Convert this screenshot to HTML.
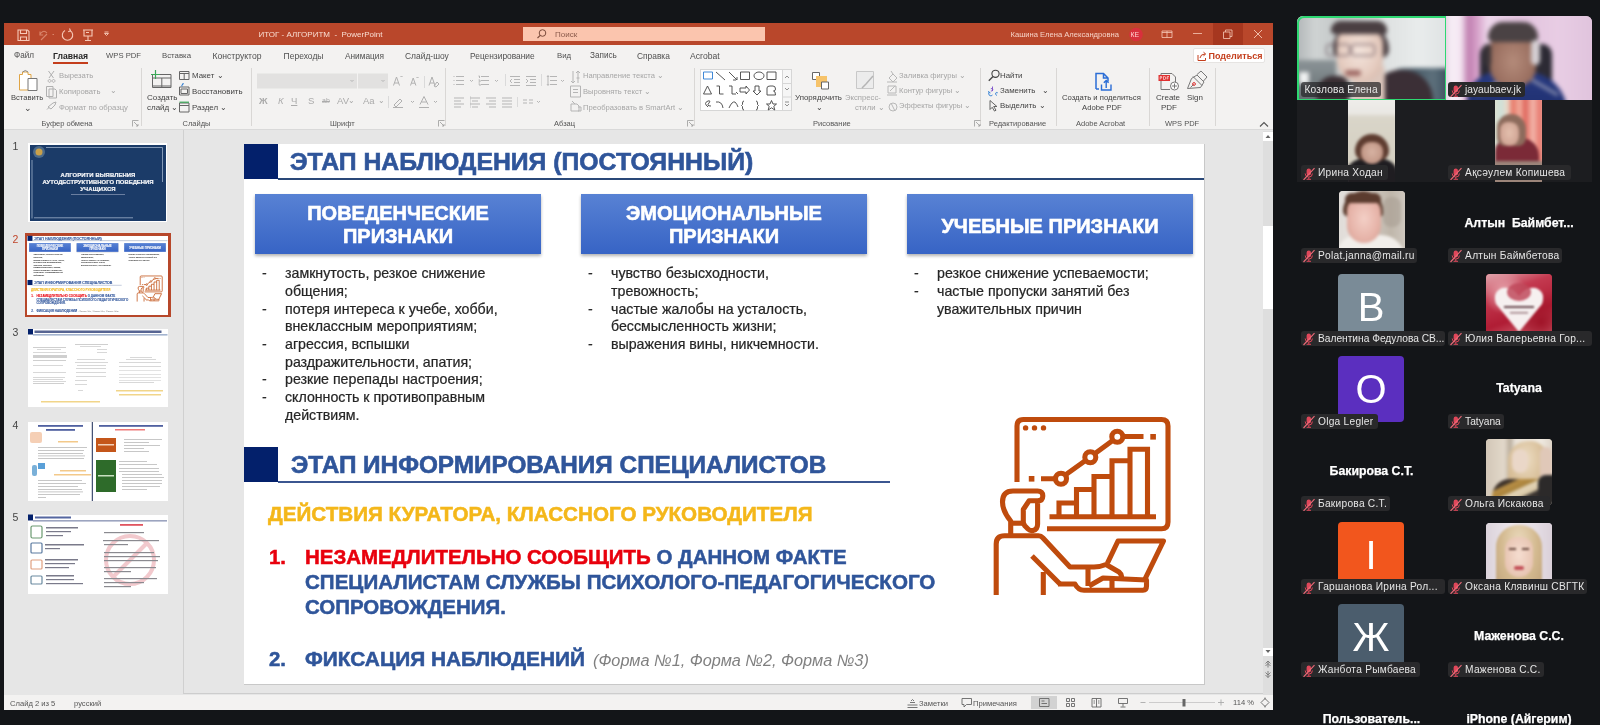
<!DOCTYPE html>
<html><head><meta charset="utf-8">
<style>
*{margin:0;padding:0;box-sizing:border-box}
html,body{width:1600px;height:725px;overflow:hidden;background:#131518;font-family:"Liberation Sans",sans-serif;position:relative}
body{will-change:transform}
.a{position:absolute;white-space:nowrap}
.r{position:absolute}
.tab{position:absolute;white-space:nowrap;font-size:8.6px;color:#454545;top:51px;line-height:10px}
.rl{position:absolute;white-space:nowrap;font-size:8px;color:#404040;line-height:10px}
.rg{position:absolute;white-space:nowrap;font-size:8px;color:#a9a9a9;line-height:10px}
.sep{position:absolute;width:1px;background:#d2d2d2}
.hdr{position:absolute;white-space:nowrap;font-weight:bold;color:#2f559a;font-size:22px;line-height:24px}
.bx{position:absolute;height:60px;background:linear-gradient(#5882d4,#3764c5);box-shadow:0 2px 3px rgba(0,0,0,.3);color:#fff;font-weight:bold;text-align:center}
.li{position:absolute;white-space:nowrap;font-size:13.2px;color:#2b2b2b;line-height:17.9px}
.lbl{position:absolute;overflow:hidden;height:15px;background:#29292b;border-radius:3px;color:#e6e6e6;font-size:10.2px;line-height:15px;padding-left:17.5px;padding-right:4px;white-space:nowrap}
.mic{position:absolute;left:1.5px;top:1.5px}
.nm{position:absolute;color:#fff;font-weight:bold;-webkit-text-stroke:0.25px #fff;font-size:12.3px;white-space:nowrap;line-height:14px}
.av{position:absolute;width:66px;height:66px;border-radius:4px;color:#fff;text-align:center;font-size:40px;line-height:66px}
</style></head><body>
<!-- PowerPoint window frame -->
<div class="r" style="left:4px;top:23px;width:1269px;height:22px;background:#b9472b"></div>
<div class="r" style="left:4px;top:45px;width:1269px;height:85px;background:#f3f2f1"></div>
<div class="r" style="left:4px;top:129px;width:1269px;height:1px;background:#d9d9d9"></div>
<div class="r" style="left:4px;top:130px;width:1269px;height:565px;background:#e6e6e6"></div>
<div class="r" style="left:183px;top:130px;width:1080px;height:564px;background:#e6e6e6;border-left:1px solid #d0d0d0;border-bottom:1px solid #cdcdcd"></div>
<div class="r" style="left:4px;top:695px;width:1269px;height:15px;background:#f3f2f1"></div>
<!--RIBBON-->
<div class="r" style="left:1212.5px;top:23px;width:30px;height:22px;background:#a6371f;"></div>
<svg class="r" style="left:0;top:0" width="1273" height="50" viewBox="0 0 1273 50">
<g fill="none" stroke="#f6c9b8" stroke-width="1.1">
<path d="M18 30h9.5l1.5 1.5v9h-11z M20.5 30v3.5h6v-3.5 M20.5 40.5v-3.5h6v3.5"/>
<path d="M47 33 q-3 -3.5 -6 0 l-1.5 1.8 M40 31.5v3.5h3.2 M41 40 l6 -6" stroke="#d9866c"/>
<path d="M52.5 34.5h1.5" stroke="#d9866c"/>
<path d="M65 30.5 a5.2 5.2 0 1 0 5 0 M69.5 28.5 l1 2.3 l-2.3 0.9"/>
<path d="M83 30h10 M84 30v6h8v-6 M88 36v4 M85 40.5h6 M86 32.5h3"/>
<path d="M104.5 33.5h4l-2 2z M104.5 32h4" stroke-width="0.9"/>
<path d="M1162 31h10v6.5h-10z M1167 31v6.5 M1162 32.5h10" stroke-width="0.8"/>
<path d="M1193 33.5h9" stroke-width="0.8"/>
<path d="M1223.5 32h6.5v6.5h-6.5z M1225.5 32v-2h6.5v6.5h-2" stroke-width="0.8"/>
<path d="M1254 30l8 8 M1262 30l-8 8" stroke-width="0.9"/>
</g>
<circle cx="1136" cy="34.5" r="6.8" fill="#d8303c"/>
</svg>
<div class="a" style="left:258.5px;top:29.9px;font-size:8.0px;line-height:10px;color:#f9ddd2;font-weight:normal;">ИТОГ - АЛГОРИТМ&nbsp; - &nbsp;PowerPoint</div>
<div class="r" style="left:523px;top:27px;width:242px;height:14px;background:#fbc5ae;"></div>
<svg class="r" style="left:535px;top:28px" width="14" height="12"><circle cx="7.5" cy="5" r="3.3" fill="none" stroke="#7a4a3a" stroke-width="1"/><path d="M5.2 7.3 L2.5 10" stroke="#7a4a3a" stroke-width="1.1"/></svg>
<div class="a" style="left:555px;top:30.1px;font-size:8px;line-height:10px;color:#8b5a4b;font-weight:normal;">Поиск</div>
<div class="a" style="left:1010.5px;top:30.2px;font-size:7.6px;line-height:10px;color:#f6d3c7;font-weight:normal;">Кашина Елена Александровна</div>
<div class="a" style="left:1130.5px;top:29.9px;font-size:6.8px;line-height:10px;color:#ffd0d0;font-weight:normal;">КЕ</div>
<div class="a" style="left:14px;top:50.9px;font-size:8.14px;line-height:10px;color:#505050;font-weight:normal;">Файл</div>
<div class="a" style="left:53px;top:50.9px;font-size:8.6px;line-height:10px;color:#262626;font-weight:bold;">Главная</div>
<div class="a" style="left:106px;top:50.9px;font-size:7.7px;line-height:10px;color:#505050;font-weight:normal;">WPS PDF</div>
<div class="a" style="left:162px;top:50.9px;font-size:7.8px;line-height:10px;color:#505050;font-weight:normal;">Вставка</div>
<div class="a" style="left:212.5px;top:50.9px;font-size:8.6px;line-height:10px;color:#505050;font-weight:normal;">Конструктор</div>
<div class="a" style="left:283.6px;top:50.9px;font-size:8.5px;line-height:10px;color:#505050;font-weight:normal;">Переходы</div>
<div class="a" style="left:345px;top:50.9px;font-size:8.3px;line-height:10px;color:#505050;font-weight:normal;">Анимация</div>
<div class="a" style="left:405px;top:50.9px;font-size:8.45px;line-height:10px;color:#505050;font-weight:normal;">Слайд-шоу</div>
<div class="a" style="left:470px;top:50.9px;font-size:8.4px;line-height:10px;color:#505050;font-weight:normal;">Рецензирование</div>
<div class="a" style="left:557px;top:50.9px;font-size:7.8px;line-height:10px;color:#505050;font-weight:normal;">Вид</div>
<div class="a" style="left:590px;top:50.9px;font-size:8.2px;line-height:10px;color:#505050;font-weight:normal;">Запись</div>
<div class="a" style="left:637px;top:50.9px;font-size:8.4px;line-height:10px;color:#505050;font-weight:normal;">Справка</div>
<div class="a" style="left:690px;top:50.9px;font-size:8.6px;line-height:10px;color:#505050;font-weight:normal;">Acrobat</div>
<div class="r" style="left:53px;top:62.3px;width:35px;height:1.8px;background:#c43e1c;"></div>
<div class="r" style="left:1193px;top:48px;width:72px;height:15px;background:#ffffff;border:1px solid #e6e4e2;border-radius:2px"></div>
<div class="a" style="left:1208.5px;top:50.9px;font-size:9.0px;line-height:10px;color:#c43e1c;font-weight:bold;">Поделиться</div>
<svg class="r" style="left:1196px;top:50px" width="12" height="12"><path d="M2 5v5.5h7.5V8 M4 8 q0.5 -4 5 -4 M7.5 2.2 l2.2 1.8 -2.2 1.8" fill="none" stroke="#c43e1c" stroke-width="1"/></svg>
<div class="r" style="left:141px;top:68px;width:1px;height:58px;background:#d9d7d5;"></div>
<div class="r" style="left:251px;top:68px;width:1px;height:58px;background:#d9d7d5;"></div>
<div class="r" style="left:445px;top:68px;width:1px;height:58px;background:#d9d7d5;"></div>
<div class="r" style="left:694px;top:68px;width:1px;height:58px;background:#d9d7d5;"></div>
<div class="r" style="left:980px;top:68px;width:1px;height:58px;background:#d9d7d5;"></div>
<div class="r" style="left:1055.5px;top:68px;width:1px;height:58px;background:#d9d7d5;"></div>
<div class="r" style="left:1148.5px;top:68px;width:1px;height:58px;background:#d9d7d5;"></div>
<div class="r" style="left:1214.5px;top:68px;width:1px;height:58px;background:#d9d7d5;"></div>
<div class="a" style="left:41.5px;top:118.9px;font-size:7.5px;line-height:10px;color:#555555;font-weight:normal;">Буфер обмена</div>
<div class="a" style="left:182.5px;top:118.9px;font-size:7.5px;line-height:10px;color:#555555;font-weight:normal;">Слайды</div>
<div class="a" style="left:330px;top:118.9px;font-size:7.5px;line-height:10px;color:#555555;font-weight:normal;">Шрифт</div>
<div class="a" style="left:554px;top:118.9px;font-size:7.5px;line-height:10px;color:#555555;font-weight:normal;">Абзац</div>
<div class="a" style="left:813px;top:118.9px;font-size:7.5px;line-height:10px;color:#555555;font-weight:normal;">Рисование</div>
<div class="a" style="left:989px;top:118.9px;font-size:7.5px;line-height:10px;color:#555555;font-weight:normal;">Редактирование</div>
<div class="a" style="left:1076px;top:118.9px;font-size:7.5px;line-height:10px;color:#555555;font-weight:normal;">Adobe Acrobat</div>
<div class="a" style="left:1165px;top:118.9px;font-size:7.5px;line-height:10px;color:#555555;font-weight:normal;">WPS PDF</div>
<svg class="r" style="left:132px;top:120px" width="7" height="7"><path d="M0.5 6.5V0.5H6.5 M2 2l4 4 M4 6h2V4" fill="none" stroke="#9a9a9a" stroke-width="0.8"/></svg>
<svg class="r" style="left:438px;top:120px" width="7" height="7"><path d="M0.5 6.5V0.5H6.5 M2 2l4 4 M4 6h2V4" fill="none" stroke="#9a9a9a" stroke-width="0.8"/></svg>
<svg class="r" style="left:687px;top:120px" width="7" height="7"><path d="M0.5 6.5V0.5H6.5 M2 2l4 4 M4 6h2V4" fill="none" stroke="#9a9a9a" stroke-width="0.8"/></svg>
<svg class="r" style="left:974px;top:120px" width="7" height="7"><path d="M0.5 6.5V0.5H6.5 M2 2l4 4 M4 6h2V4" fill="none" stroke="#9a9a9a" stroke-width="0.8"/></svg>
<svg class="r" style="left:1259px;top:121px" width="10" height="7"><path d="M1 5.5l4 -4 4 4" fill="none" stroke="#555" stroke-width="1.1"/></svg>
<div class="a" style="left:11px;top:92.9px;font-size:7.6px;line-height:10px;color:#444444;font-weight:normal;">Вставить</div>
<div class="a" style="left:24px;top:103.4px;font-size:9px;line-height:10px;color:#444444;font-weight:normal;">⌄</div>
<div class="a" style="left:59px;top:70.9px;font-size:7.7px;line-height:10px;color:#a6a6a6;font-weight:normal;">Вырезать</div>
<div class="a" style="left:59px;top:86.9px;font-size:7.7px;line-height:10px;color:#a6a6a6;font-weight:normal;">Копировать</div>
<div class="a" style="left:110px;top:86.4px;font-size:8px;line-height:10px;color:#a6a6a6;font-weight:normal;">⌄</div>
<div class="a" style="left:59px;top:102.9px;font-size:7.7px;line-height:10px;color:#a6a6a6;font-weight:normal;">Формат по образцу</div>
<div class="a" style="left:147px;top:92.9px;font-size:8px;line-height:10px;color:#444444;font-weight:normal;">Создать</div>
<div class="a" style="left:147px;top:102.9px;font-size:8px;line-height:10px;color:#444444;font-weight:normal;">слайд ⌄</div>
<div class="a" style="left:192px;top:70.9px;font-size:7.9px;line-height:10px;color:#444444;font-weight:normal;">Макет ⌄</div>
<div class="a" style="left:192px;top:86.9px;font-size:7.9px;line-height:10px;color:#444444;font-weight:normal;">Восстановить</div>
<div class="a" style="left:192px;top:102.9px;font-size:7.9px;line-height:10px;color:#444444;font-weight:normal;">Раздел ⌄</div>
<svg class="r" style="left:0;top:60px" width="1273" height="60" viewBox="0 60 1273 60">
<g fill="none" stroke-width="1">
<!-- paste -->
<path d="M19.5 74.5h3v-2.5h5.5v2.5h3v15.5h-11.5z" stroke="#e0a545" fill="#fff"/>
<path d="M22.5 72 q3 -3 5.5 0" stroke="#888"/>
<path d="M28 78.5h9v12h-9z" stroke="#777" fill="#fff"/>
<!-- cut -->
<path d="M48.5 71l5 7 M54 71l-5 7 M49.5 79.5a1.4 1.4 0 1 0 0.1 0 M53.5 79.5a1.4 1.4 0 1 0 0.1 0" stroke="#b0b0b0"/>
<path d="M46.5 86.5h6.5v10h-6.5z M49 89h6l1.5 1.5v7.5h-7.5z" stroke="#b0b0b0" fill="#f3f2f1"/>
<path d="M48 107l5 -4 3 -1 -1 3 -4 4z M47 109.5l2 -2" stroke="#b0b0b0"/>
<!-- new slide -->
<path d="M152.5 74.5h18.5v13h-18.5z M152.5 78h18.5 M161.8 78v9.5 M152.5 86h18.5" stroke="#666"/>
<path d="M155.5 70v9 M151 74.5h9" stroke="#3aa757" stroke-width="1.2"/>
<path d="M179.5 71.5h9.5v8h-9.5z M179.5 73.5h9.5 M184.2 73.5v6" stroke="#666"/>
<path d="M179.5 87h9.5v8h-9.5z M181 89h6.5v4.5h-6.5z" stroke="#666"/>
<path d="M182 86.5 q-1 -2 1.5 -2.5 l-1 -1" stroke="#2b7cd3"/>
<path d="M179.5 103h9.5v9h-9.5z M179.5 105.5h9.5" stroke="#666"/>
<path d="M179.5 102.2h9.5" stroke="#3aa757" stroke-width="1.2"/>
<!-- font boxes -->
<rect x="257" y="73.5" width="100" height="15" fill="#e2e1e0" stroke="none"/>
<rect x="358" y="73.5" width="30" height="15" fill="#e2e1e0" stroke="none"/>
<path d="M350.5 80l1.5 1.5 1.5 -1.5 M381.5 80l1.5 1.5 1.5 -1.5" stroke="#b5b5b5"/>
<path d="M393.5 85.5l3 -8.5 3 8.5 M394.5 83h4 M400.5 77l1 -1 1 1" stroke="#b0b0b0"/>
<path d="M410.5 85.5l2.7 -7.5 2.7 7.5 M411.5 83.2h3.4 M416.5 77l1 1 1 -1" stroke="#b0b0b0"/>
<path d="M424.5 76v12" stroke="#dadada"/>
<path d="M429 85.5l3 -8.5 3 8.5 M430 83h4 M434 86l3 -4 2 2 -3 3z" stroke="#b0b0b0"/>
<path d="M388.5 96v12 M517.5 97v10 M505.5 74v12 M541.5 74v12 M470.5 96v12" stroke="#dadada"/>
<path d="M393 107.5h10 M394 105l6 -6 2 2 -6 6z M411 101l1.5 1.5 1.5 -1.5" stroke="#b0b0b0"/>
<path d="M419 107.5h10 M420 104.5l4 -8 4 8 M421.5 102h5 M434 101l1.5 1.5 1.5 -1.5" stroke="#b0b0b0"/>
<!-- paragraph -->
<g stroke="#b5b5b5">
<path d="M456 76.5h8 M456 80.5h8 M456 84.5h8 M453.5 76.5h1 M453.5 80.5h1 M453.5 84.5h1 M470 80l1.5 1.5 1.5 -1.5"/>
<path d="M481 76.5h8 M481 80.5h8 M481 84.5h8 M478.5 76h1v2 M478.5 80h1.5v2h-1.5 M478.5 84h1.5v2 M495 80l1.5 1.5 1.5 -1.5"/>
<path d="M510 76.5h10 M514 79.5h6 M514 82.5h6 M510 85.5h10 M512 79l-2 2 2 2"/>
<path d="M526 76.5h10 M530 79.5h6 M530 82.5h6 M526 85.5h10 M526 79l2 2 -2 2"/>
<path d="M550 76.5h7 M550 80.5h7 M550 84.5h7 M547 77l1 -1.5 1 1.5 M547 84l1 1.5 1 -1.5 M548 76v8 M561 80l1.5 1.5 1.5 -1.5"/>
<path d="M454 98h10 M454 101h7 M454 104h10 M454 107h7"/>
<path d="M470 98h10 M472 101h6 M470 104h10 M472 107h6"/>
<path d="M486 98h10 M489 101h7 M486 104h10 M489 107h7"/>
<path d="M502 98h10 M502 101h10 M502 104h10 M502 107h10"/>
<path d="M523 100h4 M529 100h4 M523 103h4 M529 103h4 M537 101l1.5 1.5 1.5 -1.5"/>
<path d="M573 71v12 M571 81l2 2 2 -2 M578 83v-12 M576 73l2 -2 2 2 M576.5 78h3"/>
<path d="M570.5 86h10v11h-10z M573 89.5h5 M573 92.5h5" />
<path d="M571 104h6l2 2v5h-8z M572 101l3 3 M578 107h3v4h-3"/>
</g>
<!-- shapes gallery -->
<rect x="700.5" y="69.5" width="91" height="41" fill="#fff" stroke="#d6d6d6"/>
<rect x="782.5" y="69.5" width="9" height="41" fill="#f6f6f6" stroke="#d6d6d6"/>
<path d="M782.5 83.5h9 M782.5 97h9" stroke="#d6d6d6"/>
<path d="M785 78l2 -2 2 2 M785 88l2 2 2 -2 M785 102h4 M785 104l2 2 2 -2" stroke="#777" stroke-width="0.8"/>
<g stroke="#444" stroke-width="0.9">
<path d="M703.5 72h9v7h-9z" stroke="#2b7cd3"/>
<path d="M716 72l9 8 M729 72l8 8 M736 80h-3 M737 80v-3 M740.5 72h9v7.5h-9z"/>
<ellipse cx="759" cy="75.8" rx="5" ry="3.8"/>
<path d="M767 72h9v7.5h-9z"/>
<path d="M703.5 94l4 -8 4 8z M716.5 86h3v8h4 M729 86h3v8h4 M738 94l-2 -2 M740 88h6v-2l3.5 4 -3.5 4v-2h-6z M755 86h4v5h2l-4 4 -4 -4h2z M767 95v-7q0 -2 3 -2h3q2.5 0 2.5 3 0 2 -2 2q2 0 2 4z"/>
<path d="M708 107q-5 -4 0 -6q3 -1 1 2q-3 3 2 3 M716 102q6 -1 7 6 M729 108q3 -7 6 -6 q2 2 3 5 M744 101q-1.5 0 -1.5 2v1.5l-1 1l1 1v1.5q0 2 1.5 2 M756 101q1.5 0 1.5 2v1.5l1 1l-1 1v1.5q0 2 -1.5 2 M771.5 100.5l1.5 3.5h3.5l-2.7 2.3 1 3.7 -3.3 -2.2 -3.3 2.2 1 -3.7 -2.7 -2.3h3.5z"/>
</g>
<!-- arrange -->
<path d="M812.5 72.5h7v7h-7z" stroke="#666" fill="#fff"/>
<path d="M816 76h11v11h-11z" fill="#f6c36a" stroke="none"/>
<path d="M821.5 82h7v7h-7z" stroke="#666" fill="#fff"/>
<!-- quick styles -->
<path d="M856.5 71.5h17v17h-17z" stroke="#c8c8c8" fill="#ececec"/>
<path d="M862 88l4 -4 7 -8 M864 86l-2 2" stroke="#b5b5b5" stroke-width="1.5"/>
<!-- fill/outline/effects -->
<g stroke="#b8b8b8">
<path d="M889 78l4 -4 4 4 -4 4z M891 71l2 3 M887 82h10"/>
<path d="M888 86h8v7h-8z M890 91l5 -5 M887 95h10"/>
<path d="M889 107a4 4 0 1 1 8 0 a4 4 0 1 1 -8 0 M891 103l4 8"/>
</g>
<!-- find replace select -->
<circle cx="995.5" cy="73.8" r="3.6" stroke="#444" stroke-width="1.1"/>
<path d="M993 76.5 L988.8 80.8" stroke="#444" stroke-width="1.3"/>
<path d="M992.5 86.5v4.5 M990.8 88.8q2 -1.2 2 1 q0 1.5 -2 1.2" stroke="#7a4fc9" stroke-width="0.9"/>
<path d="M990.5 93q-2 -0.3 -2 -2 M997 95.5q-2.2 -0.8 -1.2 -2.6 q1 -1 2 0" stroke="#2b7cd3" stroke-width="0.9"/>
<path d="M988.5 92.5q0 3.5 2.5 3.5 l1.5 -1" stroke="#2b7cd3" stroke-width="0.9"/>
<path d="M990 100.5v9l2.2 -2.2 2.3 3.8 1.5 -0.9 -2.3 -3.7 h3.2z" stroke="#555" stroke-width="0.9"/>
<!-- adobe -->
<path d="M1096 89V73.5h7.5l4.5 4.5v3.5 M1103.5 73.5v4.5h4.5 M1096 89h3" stroke="#2b6ed6" stroke-width="1.5"/>
<path d="M1101.5 84.5v5.5h9.5v-5.5 M1106.2 88v-7.5 M1103.8 82.8l2.4 -2.4 2.4 2.4" stroke="#2b6ed6" stroke-width="1.4"/>
<!-- create pdf -->
<path d="M1161 73.5h11l3.5 3.5v5 M1161 73.5v16h9" stroke="#777" fill="none"/>
<rect x="1158.5" y="75" width="11.5" height="6" fill="#e03131" stroke="none"/>
<path d="M1160.2 79.5v-3h1.5v1.5h-1.5 M1163.5 79.5v-3h1q1.3 0 1.3 1.5 q0 1.5 -1.3 1.5z M1167.2 79.5v-3h1.8 M1167.2 78h1.4" stroke="#fff" stroke-width="0.6"/>
<circle cx="1174.5" cy="86" r="4" fill="#fff" stroke="#777"/>
<path d="M1174.5 83.5v5 M1172 86h5" stroke="#777"/>
<path d="M1187.5 88.5l4 -10 5.5 -3.5 7 7 -3.5 5.5z M1193 76.5l9 9 M1190.5 87.5l3.2 -3.2" stroke="#777"/>
<circle cx="1194" cy="84" r="1.4" stroke="#e03131"/>
<path d="M1197 74.5l4 -3.5 6 6 -3.5 4" stroke="#777"/>
</g>
</svg>
<div class="a" style="left:259px;top:96.4px;font-size:9.5px;line-height:10px;color:#ababab;font-weight:normal;font-weight:bold">Ж</div>
<div class="a" style="left:278px;top:96.4px;font-size:9.5px;line-height:10px;color:#ababab;font-weight:normal;font-style:italic">К</div>
<div class="a" style="left:291px;top:96.4px;font-size:9.5px;line-height:10px;color:#ababab;font-weight:normal;text-decoration:underline">Ч</div>
<div class="a" style="left:308px;top:96.4px;font-size:9.5px;line-height:10px;color:#ababab;font-weight:normal;">S</div>
<div class="a" style="left:322px;top:96.4px;font-size:9.5px;line-height:10px;color:#ababab;font-weight:normal;text-decoration:line-through;font-size:7px">ab</div>
<div class="a" style="left:337px;top:96.4px;font-size:9.5px;line-height:10px;color:#ababab;font-weight:normal;">AV</div>
<div class="a" style="left:363px;top:96.4px;font-size:9.5px;line-height:10px;color:#ababab;font-weight:normal;">Aa</div>
<div class="a" style="left:347.5px;top:95.9px;font-size:8px;line-height:10px;color:#a6a6a6;font-weight:normal;">⌄</div>
<div class="a" style="left:378px;top:95.9px;font-size:8px;line-height:10px;color:#a6a6a6;font-weight:normal;">⌄</div>
<div class="a" style="left:583px;top:70.9px;font-size:7.6px;line-height:10px;color:#a6a6a6;font-weight:normal;">Направление текста ⌄</div>
<div class="a" style="left:583px;top:86.9px;font-size:7.6px;line-height:10px;color:#a6a6a6;font-weight:normal;">Выровнять текст ⌄</div>
<div class="a" style="left:583px;top:102.9px;font-size:7.6px;line-height:10px;color:#a6a6a6;font-weight:normal;">Преобразовать в SmartArt ⌄</div>
<div class="a" style="left:795px;top:92.9px;font-size:7.9px;line-height:10px;color:#444444;font-weight:normal;">Упорядочить</div>
<div class="a" style="left:816px;top:102.9px;font-size:8px;line-height:10px;color:#444444;font-weight:normal;">⌄</div>
<div class="a" style="left:845px;top:92.9px;font-size:7.7px;line-height:10px;color:#a6a6a6;font-weight:normal;">Экспресс-</div>
<div class="a" style="left:855px;top:102.9px;font-size:7.7px;line-height:10px;color:#a6a6a6;font-weight:normal;">стили ⌄</div>
<div class="a" style="left:899px;top:70.9px;font-size:7.6px;line-height:10px;color:#a6a6a6;font-weight:normal;">Заливка фигуры ⌄</div>
<div class="a" style="left:899px;top:85.9px;font-size:7.6px;line-height:10px;color:#a6a6a6;font-weight:normal;">Контур фигуры ⌄</div>
<div class="a" style="left:899px;top:100.9px;font-size:7.6px;line-height:10px;color:#a6a6a6;font-weight:normal;">Эффекты фигуры ⌄</div>
<div class="a" style="left:1000px;top:70.9px;font-size:7.9px;line-height:10px;color:#444444;font-weight:normal;">Найти</div>
<div class="a" style="left:1000px;top:85.9px;font-size:7.9px;line-height:10px;color:#444444;font-weight:normal;">Заменить&nbsp;&nbsp; ⌄</div>
<div class="a" style="left:1000px;top:100.9px;font-size:7.9px;line-height:10px;color:#444444;font-weight:normal;">Выделить ⌄</div>
<div class="a" style="left:1062px;top:92.9px;font-size:7.7px;line-height:10px;color:#444444;font-weight:normal;">Создать и поделиться</div>
<div class="a" style="left:1082px;top:102.9px;font-size:7.7px;line-height:10px;color:#444444;font-weight:normal;">Adobe PDF</div>
<div class="a" style="left:1156px;top:92.9px;font-size:8px;line-height:10px;color:#444444;font-weight:normal;">Create</div>
<div class="a" style="left:1161px;top:102.9px;font-size:8px;line-height:10px;color:#444444;font-weight:normal;">PDF</div>
<div class="a" style="left:1187px;top:92.9px;font-size:8px;line-height:10px;color:#444444;font-weight:normal;">Sign</div>
<!--/RIBBON-->
<!--THUMBS-->
<div class="a" style="left:12.5px;top:140.5px;font-size:10.5px;line-height:10px;color:#444;font-weight:normal;">1</div>
<div class="a" style="left:12.5px;top:234.0px;font-size:10.5px;line-height:10px;color:#c0462b;font-weight:normal;">2</div>
<div class="a" style="left:12.5px;top:327.0px;font-size:10.5px;line-height:10px;color:#444;font-weight:normal;">3</div>
<div class="a" style="left:12.5px;top:419.5px;font-size:10.5px;line-height:10px;color:#444;font-weight:normal;">4</div>
<div class="a" style="left:12.5px;top:512.0px;font-size:10.5px;line-height:10px;color:#444;font-weight:normal;">5</div>
<div class="r" style="left:28px;top:143px;width:139px;height:79px;background:#fff;"></div>
<div class="r" style="left:30px;top:144.5px;width:136px;height:76px;background:#1b3b68;"></div>
<svg class="r" style="left:0;top:0" width="180" height="600" viewBox="0 0 180 600">
<g stroke="#9fb3cc" stroke-width="0.8" fill="none">
<path d="M46 147.5H162.5V182 M32 160V218.5 M34 217.8H133"/>
</g>
<circle cx="39" cy="152" r="6" fill="#4c6a8a"/><circle cx="39" cy="152" r="3.5" fill="#c9a04a"/>
</svg>
<div class="a" style="left:30px;width:136px;text-align:center;top:171.0px;font-size:5.9px;line-height:8px;color:#f2f4f8;font-weight:bold;letter-spacing:0.1px;-webkit-text-stroke:0.2px #fff">АЛГОРИТИ ВЫЯВЛЕНИЯ</div>
<div class="a" style="left:30px;width:136px;text-align:center;top:178.0px;font-size:5.9px;line-height:8px;color:#f2f4f8;font-weight:bold;letter-spacing:0px;-webkit-text-stroke:0.2px #fff">АУТОДЕСТРУКТИВНОГО ПОВЕДЕНИЯ</div>
<div class="a" style="left:30px;width:136px;text-align:center;top:185.0px;font-size:5.9px;line-height:8px;color:#f2f4f8;font-weight:bold;letter-spacing:0.1px;-webkit-text-stroke:0.2px #fff">УЧАЩИХСЯ</div>
<div class="r" style="left:71px;top:194px;width:54px;height:1px;background:#6a7ea0"></div>
<div class="r" style="left:24.5px;top:233px;width:146px;height:84px;background:#b7472a;"></div>
<div class="r" style="left:27px;top:235.5px;width:141px;height:79px;background:#fff;"></div>
<div class="r" style="left:0;top:0;width:1600px;height:725px;transform-origin:0 0;transform:translate(27.5px,235.8px) scale(0.1458) translate(-244px,-144px);pointer-events:none"><!-- slide content -->
<div class="r" style="left:244px;top:144px;width:34px;height:35px;background:#03206b"></div>
<div class="r" style="left:278px;top:178px;width:926px;height:2px;background:#2a4878"></div>
<div class="a" style="left:290px;top:148.16px;font-size:23.6px;line-height:28.32px;font-weight:bold;color:#2f559a;transform:scaleX(1.05);transform-origin:0 0;-webkit-text-stroke:0.6px currentColor;">ЭТАП НАБЛЮДЕНИЯ (ПОСТОЯННЫЙ)</div>
<div class="bx" style="left:255px;top:194px;width:286px"></div>
<div class="bx" style="left:581px;top:194px;width:286px"></div>
<div class="bx" style="left:907px;top:194px;width:286px"></div>
<div class="a" style="left:198px;width:400px;text-align:center;top:200.87px;font-size:20px;line-height:24.0px;font-weight:bold;color:#fff;-webkit-text-stroke:0.6px #fff">ПОВЕДЕНЧЕСКИЕ</div>
<div class="a" style="left:198px;width:400px;text-align:center;top:224.17px;font-size:20px;line-height:24.0px;font-weight:bold;color:#fff;-webkit-text-stroke:0.6px #fff">ПРИЗНАКИ</div>
<div class="a" style="left:524px;width:400px;text-align:center;top:200.87px;font-size:20px;line-height:24.0px;font-weight:bold;color:#fff;-webkit-text-stroke:0.6px #fff">ЭМОЦИОНАЛЬНЫЕ</div>
<div class="a" style="left:524px;width:400px;text-align:center;top:224.17px;font-size:20px;line-height:24.0px;font-weight:bold;color:#fff;-webkit-text-stroke:0.6px #fff">ПРИЗНАКИ</div>
<div class="a" style="left:850px;width:400px;text-align:center;top:213.67px;font-size:20px;line-height:24.0px;font-weight:bold;color:#fff;-webkit-text-stroke:0.6px #fff">УЧЕБНЫЕ ПРИЗНАКИ</div>
<div class="a" style="left:262px;top:265.16px;font-size:14.2px;line-height:17.04px;font-weight:normal;color:#2b2b2b;-webkit-text-stroke:0.15px currentColor;">-</div>
<div class="a" style="left:285px;top:265.16px;font-size:14.2px;line-height:17.04px;font-weight:normal;color:#262626;-webkit-text-stroke:0.22px currentColor;">замкнутость, резкое снижение</div>
<div class="a" style="left:285px;top:282.86px;font-size:14.2px;line-height:17.04px;font-weight:normal;color:#262626;-webkit-text-stroke:0.22px currentColor;">общения;</div>
<div class="a" style="left:262px;top:300.56px;font-size:14.2px;line-height:17.04px;font-weight:normal;color:#2b2b2b;-webkit-text-stroke:0.15px currentColor;">-</div>
<div class="a" style="left:285px;top:300.56px;font-size:14.2px;line-height:17.04px;font-weight:normal;color:#262626;-webkit-text-stroke:0.22px currentColor;">потеря интереса к учебе, хобби,</div>
<div class="a" style="left:285px;top:318.26px;font-size:14.2px;line-height:17.04px;font-weight:normal;color:#262626;-webkit-text-stroke:0.22px currentColor;">внеклассным мероприятиям;</div>
<div class="a" style="left:262px;top:335.96px;font-size:14.2px;line-height:17.04px;font-weight:normal;color:#2b2b2b;-webkit-text-stroke:0.15px currentColor;">-</div>
<div class="a" style="left:285px;top:335.96px;font-size:14.2px;line-height:17.04px;font-weight:normal;color:#262626;-webkit-text-stroke:0.22px currentColor;">агрессия, вспышки</div>
<div class="a" style="left:285px;top:353.66px;font-size:14.2px;line-height:17.04px;font-weight:normal;color:#262626;-webkit-text-stroke:0.22px currentColor;">раздражительности, апатия;</div>
<div class="a" style="left:262px;top:371.36px;font-size:14.2px;line-height:17.04px;font-weight:normal;color:#2b2b2b;-webkit-text-stroke:0.15px currentColor;">-</div>
<div class="a" style="left:285px;top:371.36px;font-size:14.2px;line-height:17.04px;font-weight:normal;color:#262626;-webkit-text-stroke:0.22px currentColor;">резкие перепады настроения;</div>
<div class="a" style="left:262px;top:389.06px;font-size:14.2px;line-height:17.04px;font-weight:normal;color:#2b2b2b;-webkit-text-stroke:0.15px currentColor;">-</div>
<div class="a" style="left:285px;top:389.06px;font-size:14.2px;line-height:17.04px;font-weight:normal;color:#262626;-webkit-text-stroke:0.22px currentColor;">склонность к противоправным</div>
<div class="a" style="left:285px;top:406.76px;font-size:14.2px;line-height:17.04px;font-weight:normal;color:#262626;-webkit-text-stroke:0.22px currentColor;">действиям.</div>
<div class="a" style="left:588px;top:265.16px;font-size:14.2px;line-height:17.04px;font-weight:normal;color:#2b2b2b;-webkit-text-stroke:0.15px currentColor;">-</div>
<div class="a" style="left:611px;top:265.16px;font-size:14.2px;line-height:17.04px;font-weight:normal;color:#262626;-webkit-text-stroke:0.22px currentColor;">чувство безысходности,</div>
<div class="a" style="left:611px;top:282.86px;font-size:14.2px;line-height:17.04px;font-weight:normal;color:#262626;-webkit-text-stroke:0.22px currentColor;">тревожность;</div>
<div class="a" style="left:588px;top:300.56px;font-size:14.2px;line-height:17.04px;font-weight:normal;color:#2b2b2b;-webkit-text-stroke:0.15px currentColor;">-</div>
<div class="a" style="left:611px;top:300.56px;font-size:14.2px;line-height:17.04px;font-weight:normal;color:#262626;-webkit-text-stroke:0.22px currentColor;">частые жалобы на усталость,</div>
<div class="a" style="left:611px;top:318.26px;font-size:14.2px;line-height:17.04px;font-weight:normal;color:#262626;-webkit-text-stroke:0.22px currentColor;">бессмысленность жизни;</div>
<div class="a" style="left:588px;top:335.96px;font-size:14.2px;line-height:17.04px;font-weight:normal;color:#2b2b2b;-webkit-text-stroke:0.15px currentColor;">-</div>
<div class="a" style="left:611px;top:335.96px;font-size:14.2px;line-height:17.04px;font-weight:normal;color:#262626;-webkit-text-stroke:0.22px currentColor;">выражения вины, никчемности.</div>
<div class="a" style="left:914px;top:265.16px;font-size:14.2px;line-height:17.04px;font-weight:normal;color:#2b2b2b;-webkit-text-stroke:0.15px currentColor;">-</div>
<div class="a" style="left:937px;top:265.16px;font-size:14.2px;line-height:17.04px;font-weight:normal;color:#262626;-webkit-text-stroke:0.22px currentColor;">резкое снижение успеваемости;</div>
<div class="a" style="left:914px;top:282.86px;font-size:14.2px;line-height:17.04px;font-weight:normal;color:#2b2b2b;-webkit-text-stroke:0.15px currentColor;">-</div>
<div class="a" style="left:937px;top:282.86px;font-size:14.2px;line-height:17.04px;font-weight:normal;color:#262626;-webkit-text-stroke:0.22px currentColor;">частые пропуски занятий без</div>
<div class="a" style="left:937px;top:300.56px;font-size:14.2px;line-height:17.04px;font-weight:normal;color:#262626;-webkit-text-stroke:0.22px currentColor;">уважительных причин</div>
<div class="r" style="left:244px;top:447px;width:34px;height:35px;background:#03206b"></div>
<div class="r" style="left:278px;top:481px;width:612px;height:2px;background:#3b5690"></div>
<div class="a" style="left:290.5px;top:450.85px;font-size:23.4px;line-height:28.08px;font-weight:bold;color:#2f559a;transform:scaleX(1.04);transform-origin:0 0;-webkit-text-stroke:0.6px currentColor;">ЭТАП ИНФОРМИРОВАНИЯ СПЕЦИАЛИСТОВ</div>
<div class="a" style="left:268px;top:503.23px;font-size:19.3px;line-height:23.16px;font-weight:bold;color:#f4b71a;transform:scaleX(1.07);transform-origin:0 0;-webkit-text-stroke:0.5px currentColor;">ДЕЙСТВИЯ КУРАТОРА, КЛАССНОГО РУКОВОДИТЕЛЯ</div>
<div class="a" style="left:268.5px;top:545.75px;font-size:19.6px;line-height:23.52px;font-weight:bold;color:#e8000d;transform:scaleX(1.04);transform-origin:0 0;-webkit-text-stroke:0.5px currentColor;">1.</div>
<div class="a" style="left:304.5px;top:545.75px;font-size:19.6px;line-height:23.52px;font-weight:bold;color:#2f559a;transform:scaleX(1.045);transform-origin:0 0;-webkit-text-stroke:0.5px currentColor;"><span style="color:#e8000d">НЕЗАМЕДЛИТЕЛЬНО СООБЩИТЬ</span> О ДАННОМ ФАКТЕ</div>
<div class="a" style="left:304.5px;top:571.05px;font-size:19.6px;line-height:23.52px;font-weight:bold;color:#2f559a;transform:scaleX(1.05);transform-origin:0 0;-webkit-text-stroke:0.5px currentColor;">СПЕЦИАЛИСТАМ СЛУЖБЫ ПСИХОЛОГО-ПЕДАГОГИЧЕСКОГО</div>
<div class="a" style="left:304.5px;top:596.35px;font-size:19.6px;line-height:23.52px;font-weight:bold;color:#2f559a;transform:scaleX(1.045);transform-origin:0 0;-webkit-text-stroke:0.5px currentColor;">СОПРОВОЖДЕНИЯ.</div>
<div class="a" style="left:268.5px;top:647.95px;font-size:19.6px;line-height:23.52px;font-weight:bold;color:#2f559a;transform:scaleX(1.04);transform-origin:0 0;-webkit-text-stroke:0.5px currentColor;">2.</div>
<div class="a" style="left:304.5px;top:647.95px;font-size:19.6px;line-height:23.52px;font-weight:bold;color:#2f559a;transform:scaleX(1.065);transform-origin:0 0;-webkit-text-stroke:0.5px currentColor;">ФИКСАЦИЯ НАБЛЮДЕНИЙ</div>
<div class="a" style="left:593px;top:651.07px;font-size:16.3px;line-height:19.56px;font-weight:normal;color:#808080;font-style:italic">(Форма №1, Форма №2, Форма №3)</div>
<svg class="r" style="left:0;top:0" width="1600" height="725" viewBox="0 0 1600 725">
<g fill="none" stroke="#bf4b0d" stroke-width="5.1" stroke-linejoin="round">
<path d="M1017 482 L1017 426 Q1017 419.5 1023.5 419.5 L1161.5 419.5 Q1168 419.5 1168 426 L1168 522 Q1168 528.8 1161.5 528.8 L1047 528.8"/>
<path d="M1041 478.7 L1056 478.7 M1066 474.5 L1085.5 460.5 M1095 453.5 L1112 441 M1123 436.5 L1143.5 436.5" stroke-linecap="butt"/>
<circle cx="1061" cy="478.7" r="5.5" fill="#fff"/>
<circle cx="1090.3" cy="457.3" r="5.5" fill="#fff"/>
<circle cx="1117.3" cy="436.8" r="5.5" fill="#fff"/>
<path d="M1049.5 516.7 L1156 516.7" stroke-linecap="butt"/>
<path d="M1059 516.7 V503 H1076.5 V489.5 H1094 V476.5 H1112 V460.8 H1130 V449.3 H1147.5 V516.7 M1076.5 503 V516.7 M1094 489.5 V516.7 M1112 476.5 V516.7 M1130 460.8 V516.7" stroke-linejoin="miter" stroke-linecap="butt"/>
<!-- head -->
<path d="M1010.7 536 L1010.7 521 Q1002.5 511 1002.5 502 Q1002.5 491 1013 491 L1037.5 491 Q1042.8 491 1042.8 496 Q1042.8 500.8 1037.5 500.8 L1029 500.8 L1023.3 509.5 L1023.3 522 Q1023.3 524 1025 526 L1028 529 Q1030 531 1033 530.5 Q1037.6 529.5 1037.6 524 L1037.6 503"/>
<path d="M1010.7 523.2 L1023.3 523.2" stroke-linecap="butt"/>
<!-- body -->
<path d="M996.2 595 L996.2 544 Q996.2 535.8 1004.5 535.8 L1038.5 535.8 Q1041 535.8 1043 538 L1070 567 L1094 567 Q1100 567 1106 564.5 L1119 572 Q1122.5 575 1121 578" />
<path d="M1032 556 L1058.5 582.5 L1060 584" stroke-linecap="butt"/>
<path d="M1043.3 572 L1043.3 595" stroke-linecap="butt"/>
<path d="M1088 569 L1088 586" stroke-linecap="butt"/>
<!-- laptop -->
<path d="M1107.5 563 L1118 541 L1163.5 541 L1145 579"/>
<path d="M1058 584 L1075 584 Q1078 590.2 1084 590.2 L1143 590.2 Q1146.5 590.2 1146.5 586 L1146.5 580 L1103 578 L1089 586"/>
<path d="M1112 590 L1112 580" stroke-linecap="butt"/>
</g>
<g fill="#bf4b0d">
<circle cx="1025.6" cy="427.9" r="2.7"/><circle cx="1034.5" cy="427.9" r="2.7"/><circle cx="1043.5" cy="427.9" r="2.7"/>
<rect x="1028.8" y="476" width="5.6" height="5.6"/>
<rect x="1150.3" y="434" width="5.6" height="5.6"/>
</g>
</svg>
</div>
<div class="r" style="left:27.5px;top:329px;width:140px;height:78px;background:#fff;"></div>
<svg class="r" style="left:0;top:0" width="180" height="600" viewBox="0 0 180 600">
<rect x="28" y="329" width="5" height="5.5" fill="#03206b"/>
<rect x="34.5" y="330.5" width="127" height="2.5" fill="#3a4a80" opacity=".85"/>
<rect x="33" y="334.5" width="134.5" height="0.8" fill="#4a6aa0"/>
<g fill="#cfcfcf">
<rect x="33" y="347" width="33" height="1"/><rect x="37" y="349" width="24" height="0.8"/><rect x="33" y="352" width="33" height="0.8"/><rect x="33" y="355" width="34" height="3"/><rect x="33" y="360" width="33" height="1"/><rect x="33" y="365" width="30" height="0.8"/><rect x="33" y="372" width="33" height="0.8"/><rect x="33" y="377" width="32" height="0.8"/><rect x="33" y="379" width="30" height="0.8"/><rect x="33" y="381" width="33" height="0.8"/><rect x="33" y="383" width="31" height="1"/>
<rect x="75" y="344" width="33" height="1"/><rect x="80" y="346" width="21" height="0.8"/><rect x="97" y="349" width="10" height="0.8"/><rect x="97" y="352" width="10" height="0.8"/><rect x="77" y="359" width="28" height="0.8"/><rect x="75" y="362" width="33" height="0.8"/><rect x="77" y="365" width="29" height="0.8"/><rect x="76" y="368" width="30" height="0.8"/><rect x="76" y="372" width="30" height="0.8"/><rect x="76" y="376" width="30" height="0.8"/><rect x="75" y="380" width="12" height="0.8"/><rect x="75" y="384" width="12" height="0.8"/><rect x="78" y="390" width="5" height="0.8"/>
<rect x="119" y="362" width="42" height="0.8"/><rect x="119" y="366" width="42" height="0.8"/><rect x="119" y="370" width="42" height="0.6"/><rect x="119" y="374" width="42" height="0.6"/><rect x="119" y="377" width="42" height="0.6"/><rect x="119" y="380" width="42" height="0.6"/><rect x="119" y="382" width="35" height="0.8"/>
<rect x="130" y="357" width="22" height="0.8"/><rect x="126" y="359" width="30" height="0.8"/>
</g>
<g fill="#f1d58a"><rect x="116" y="390" width="47" height="1.5"/><rect x="119" y="394" width="42" height="1.5"/><rect x="41" y="401" width="59" height="1.5"/></g>
</svg>
<div class="r" style="left:27.5px;top:421.5px;width:140px;height:79px;background:#fff;"></div>
<svg class="r" style="left:0;top:0" width="180" height="600" viewBox="0 0 180 600">
<rect x="91.8" y="422" width="1" height="79" fill="#1a2a55"/>
<g fill="#5060a0"><rect x="38" y="425" width="45" height="1.8"/><rect x="46" y="429" width="29" height="1.8"/><rect x="99" y="425" width="64" height="1.8"/></g>
<rect x="115" y="429" width="30" height="1.5" fill="#ee7a7a"/>
<rect x="58" y="441" width="20" height="1.5" fill="#f3c98a"/>
<rect x="30" y="432" width="12" height="11" rx="2" fill="#f3c3a3" opacity=".8"/>
<g fill="#b9b9b9"><rect x="38" y="447" width="49" height="0.8"/><rect x="38" y="450" width="46" height="0.8"/><rect x="38" y="453" width="45" height="0.8"/><rect x="38" y="455.5" width="47" height="0.8"/><rect x="38" y="458" width="46" height="0.8"/>
<rect x="38" y="480" width="44" height="0.8"/><rect x="38" y="483" width="48" height="0.8"/><rect x="38" y="486" width="40" height="0.8"/><rect x="38" y="489" width="44" height="0.8"/><rect x="38" y="491.5" width="45" height="0.8"/><rect x="38" y="494" width="42" height="0.8"/><rect x="38" y="497" width="8" height="0.8"/>
<rect x="124" y="439" width="38" height="0.8"/><rect x="124" y="442" width="25" height="0.8"/><rect x="124" y="445" width="36" height="0.8"/><rect x="124" y="448" width="20" height="0.8"/><rect x="124" y="451" width="25" height="0.8"/>
<rect x="119" y="461" width="28" height="0.8"/><rect x="119" y="464" width="38" height="0.8"/><rect x="119" y="468" width="40" height="0.8"/><rect x="119" y="471" width="40" height="0.8"/><rect x="122" y="474" width="40" height="0.8"/><rect x="122" y="477" width="42" height="0.8"/><rect x="122" y="480" width="40" height="0.8"/><rect x="122" y="483" width="40" height="0.8"/><rect x="122" y="486" width="38" height="0.8"/><rect x="122" y="489" width="25" height="0.8"/></g>
<rect x="96" y="438" width="20" height="14" fill="#c4561a"/>
<rect x="96" y="460" width="20" height="32" fill="#2e6b2a"/>
<rect x="98" y="444" width="16" height="1.5" fill="#f2d0b8"/>
<rect x="98" y="475" width="16" height="1.5" fill="#c8e0c0"/>
<rect x="60" y="470" width="26" height="1.5" fill="#f3c98a"/><rect x="54" y="474" width="37" height="1.5" fill="#f3c98a"/>
<rect x="32" y="465" width="5" height="11" rx="2" fill="#7ab0d8"/><rect x="38" y="463" width="7" height="6" fill="#5aa0d8"/>
</svg>
<div class="r" style="left:27.5px;top:514.5px;width:140px;height:79px;background:#fff;"></div>
<svg class="r" style="left:0;top:0" width="180" height="600" viewBox="0 0 180 600">
<rect x="28" y="514.5" width="5" height="6" fill="#03206b"/>
<rect x="35" y="516.5" width="36" height="2" fill="#5566a0"/>
<rect x="33" y="520.5" width="134" height="0.8" fill="#3a4a80"/>
<circle cx="130" cy="560" r="24" fill="none" stroke="#f2c9cd" stroke-width="4"/>
<path d="M113 577 L147 543" stroke="#f2c9cd" stroke-width="4"/>
<rect x="120" y="524" width="23" height="1.8" fill="#e05560"/>
<g fill="#7a7a8a"><rect x="46" y="527" width="32" height="1.5"/><rect x="46" y="531" width="25" height="1.2"/><rect x="46" y="535" width="17" height="1.2"/>
<rect x="45" y="544" width="39" height="1.5"/><rect x="45" y="548" width="15" height="1.2"/>
<rect x="45" y="559" width="33" height="1.5"/><rect x="45" y="563" width="30" height="1.2"/><rect x="45" y="567" width="24" height="1.2"/>
<rect x="46" y="575" width="28" height="1.5"/><rect x="46" y="579" width="28" height="1.2"/><rect x="46" y="583" width="37" height="1.2"/></g>
<g fill="#8a8a90"><rect x="104" y="532" width="40" height="1.2"/><rect x="103" y="540" width="56" height="1.2"/><rect x="104" y="544" width="24" height="1.2"/><rect x="104" y="552" width="50" height="1.2"/><rect x="104" y="556" width="56" height="1.2"/><rect x="104" y="560" width="54" height="1.2"/><rect x="104" y="567" width="52" height="1.2"/><rect x="104" y="571" width="27" height="1.2"/><rect x="104" y="578" width="53" height="1.2"/><rect x="104" y="582" width="40" height="1.2"/><rect x="104" y="586" width="27" height="1.2"/></g>
<rect x="31" y="526" width="11" height="12" rx="1.5" fill="none" stroke="#6a9a70" stroke-width="1.2"/>
<rect x="31" y="543" width="11" height="10" rx="1" fill="none" stroke="#5a7aa0" stroke-width="1.2"/>
<rect x="31" y="560" width="11" height="9" rx="1" fill="none" stroke="#e0a080" stroke-width="1.2"/>
<rect x="31" y="576" width="11" height="8" rx="1" fill="none" stroke="#6a8aa0" stroke-width="1.2"/>
</svg>
<div class="a" style="left:10px;top:698.5px;font-size:7.6px;line-height:10px;color:#555;font-weight:normal;">Слайд 2 из 5</div>
<div class="a" style="left:74px;top:698.5px;font-size:7.6px;line-height:10px;color:#555;font-weight:normal;">русский</div>
<div class="a" style="left:919px;top:698.5px;font-size:7.6px;line-height:10px;color:#555;font-weight:normal;">Заметки</div>
<div class="a" style="left:973px;top:698.5px;font-size:7.6px;line-height:10px;color:#555;font-weight:normal;">Примечания</div>
<div class="a" style="left:1233px;top:698.0px;font-size:7.6px;line-height:10px;color:#555;font-weight:normal;">114 %</div>
<div class="r" style="left:1031px;top:696px;width:26px;height:13px;background:#d2d2d2;"></div>
<svg class="r" style="left:0;top:640px" width="1273" height="85" viewBox="0 640 1273 85">
<g fill="none" stroke="#666" stroke-width="0.9">
<path d="M907.5 705h10 M907.5 707.5h10 M910 702.5h5 M912.5 699.5l-1.5 1.5 M912.5 699.5l1.5 1.5"/>
<path d="M962 698.5h9.5v6h-5l-2.5 2.5v-2.5h-2z"/>
<path d="M1039.5 698.5h9.5v8h-9.5z M1041.5 701h3 M1041.5 703.5h5.5"/>
<path d="M1066.5 698.5h3v3h-3z M1071.5 698.5h3v3h-3z M1066.5 703.5h3v3h-3z M1071.5 703.5h3v3h-3z"/>
<path d="M1092 698.5h9v8.5h-9z M1096.5 698.5v8.5 M1093.5 701h1.5 M1093.5 703h1.5 M1098 701h1.5 M1098 703h1.5"/>
<path d="M1118.5 698.5h9v5h-9z M1123 703.5v3 M1120.5 707h5"/>
<path d="M1140.5 702.5h5" stroke="#aaa"/>
<path d="M1149 702.5h66" stroke="#bbb" stroke-width="0.7"/>
<path d="M1218 702.5h6 M1221 699.5v6" stroke="#aaa"/>
<path d="M1261 702.5l4 -4 4 4 -4 4z M1265 697.5v2 M1265 705.5v2" />
</g>
<rect x="1182.5" y="699" width="3" height="7.5" fill="#666"/>
</svg>
<div class="r" style="left:1263px;top:131px;width:10px;height:564px;background:#dedede;"></div>
<div class="r" style="left:1263px;top:132px;width:9.5px;height:8.5px;background:#fff;"></div>
<div class="r" style="left:1263px;top:225.5px;width:9.5px;height:83.5px;background:#fff;"></div>
<div class="r" style="left:1263px;top:647.5px;width:9.5px;height:8px;background:#fff;"></div>
<svg class="r" style="left:1263px;top:125px" width="10" height="560" viewBox="1263 125 10 560">
<path d="M1265.5 138l2.5 -3 2.5 3z M1265.5 650l2.5 3 2.5 -3z" fill="#666"/>
<path d="M1265.5 663.5l2.5 -2.5 2.5 2.5 M1265.5 666l2.5 -2.5 2.5 2.5 M1268 661v6.5 M1265.5 672.5l2.5 2.5 2.5 -2.5 M1265.5 675l2.5 2.5 2.5 -2.5 M1268 671v6.5" stroke="#777" stroke-width="0.9" fill="none"/>
</svg>
<!--/THUMBS-->
<!-- slide -->
<div class="r" style="left:244px;top:144px;width:961px;height:541px;background:#fff;border-right:1px solid #c8c8c8;border-bottom:1px solid #c8c8c8"></div>
<!--SLIDE-->
<!-- slide content -->
<div class="r" style="left:244px;top:144px;width:34px;height:35px;background:#03206b"></div>
<div class="r" style="left:278px;top:178px;width:926px;height:2px;background:#2a4878"></div>
<div class="a" style="left:290px;top:148.16px;font-size:23.6px;line-height:28.32px;font-weight:bold;color:#2f559a;transform:scaleX(1.05);transform-origin:0 0;-webkit-text-stroke:0.6px currentColor;">ЭТАП НАБЛЮДЕНИЯ (ПОСТОЯННЫЙ)</div>
<div class="bx" style="left:255px;top:194px;width:286px"></div>
<div class="bx" style="left:581px;top:194px;width:286px"></div>
<div class="bx" style="left:907px;top:194px;width:286px"></div>
<div class="a" style="left:198px;width:400px;text-align:center;top:200.87px;font-size:20px;line-height:24.0px;font-weight:bold;color:#fff;-webkit-text-stroke:0.6px #fff">ПОВЕДЕНЧЕСКИЕ</div>
<div class="a" style="left:198px;width:400px;text-align:center;top:224.17px;font-size:20px;line-height:24.0px;font-weight:bold;color:#fff;-webkit-text-stroke:0.6px #fff">ПРИЗНАКИ</div>
<div class="a" style="left:524px;width:400px;text-align:center;top:200.87px;font-size:20px;line-height:24.0px;font-weight:bold;color:#fff;-webkit-text-stroke:0.6px #fff">ЭМОЦИОНАЛЬНЫЕ</div>
<div class="a" style="left:524px;width:400px;text-align:center;top:224.17px;font-size:20px;line-height:24.0px;font-weight:bold;color:#fff;-webkit-text-stroke:0.6px #fff">ПРИЗНАКИ</div>
<div class="a" style="left:850px;width:400px;text-align:center;top:213.67px;font-size:20px;line-height:24.0px;font-weight:bold;color:#fff;-webkit-text-stroke:0.6px #fff">УЧЕБНЫЕ ПРИЗНАКИ</div>
<div class="a" style="left:262px;top:265.16px;font-size:14.2px;line-height:17.04px;font-weight:normal;color:#2b2b2b;-webkit-text-stroke:0.15px currentColor;">-</div>
<div class="a" style="left:285px;top:265.16px;font-size:14.2px;line-height:17.04px;font-weight:normal;color:#262626;-webkit-text-stroke:0.22px currentColor;">замкнутость, резкое снижение</div>
<div class="a" style="left:285px;top:282.86px;font-size:14.2px;line-height:17.04px;font-weight:normal;color:#262626;-webkit-text-stroke:0.22px currentColor;">общения;</div>
<div class="a" style="left:262px;top:300.56px;font-size:14.2px;line-height:17.04px;font-weight:normal;color:#2b2b2b;-webkit-text-stroke:0.15px currentColor;">-</div>
<div class="a" style="left:285px;top:300.56px;font-size:14.2px;line-height:17.04px;font-weight:normal;color:#262626;-webkit-text-stroke:0.22px currentColor;">потеря интереса к учебе, хобби,</div>
<div class="a" style="left:285px;top:318.26px;font-size:14.2px;line-height:17.04px;font-weight:normal;color:#262626;-webkit-text-stroke:0.22px currentColor;">внеклассным мероприятиям;</div>
<div class="a" style="left:262px;top:335.96px;font-size:14.2px;line-height:17.04px;font-weight:normal;color:#2b2b2b;-webkit-text-stroke:0.15px currentColor;">-</div>
<div class="a" style="left:285px;top:335.96px;font-size:14.2px;line-height:17.04px;font-weight:normal;color:#262626;-webkit-text-stroke:0.22px currentColor;">агрессия, вспышки</div>
<div class="a" style="left:285px;top:353.66px;font-size:14.2px;line-height:17.04px;font-weight:normal;color:#262626;-webkit-text-stroke:0.22px currentColor;">раздражительности, апатия;</div>
<div class="a" style="left:262px;top:371.36px;font-size:14.2px;line-height:17.04px;font-weight:normal;color:#2b2b2b;-webkit-text-stroke:0.15px currentColor;">-</div>
<div class="a" style="left:285px;top:371.36px;font-size:14.2px;line-height:17.04px;font-weight:normal;color:#262626;-webkit-text-stroke:0.22px currentColor;">резкие перепады настроения;</div>
<div class="a" style="left:262px;top:389.06px;font-size:14.2px;line-height:17.04px;font-weight:normal;color:#2b2b2b;-webkit-text-stroke:0.15px currentColor;">-</div>
<div class="a" style="left:285px;top:389.06px;font-size:14.2px;line-height:17.04px;font-weight:normal;color:#262626;-webkit-text-stroke:0.22px currentColor;">склонность к противоправным</div>
<div class="a" style="left:285px;top:406.76px;font-size:14.2px;line-height:17.04px;font-weight:normal;color:#262626;-webkit-text-stroke:0.22px currentColor;">действиям.</div>
<div class="a" style="left:588px;top:265.16px;font-size:14.2px;line-height:17.04px;font-weight:normal;color:#2b2b2b;-webkit-text-stroke:0.15px currentColor;">-</div>
<div class="a" style="left:611px;top:265.16px;font-size:14.2px;line-height:17.04px;font-weight:normal;color:#262626;-webkit-text-stroke:0.22px currentColor;">чувство безысходности,</div>
<div class="a" style="left:611px;top:282.86px;font-size:14.2px;line-height:17.04px;font-weight:normal;color:#262626;-webkit-text-stroke:0.22px currentColor;">тревожность;</div>
<div class="a" style="left:588px;top:300.56px;font-size:14.2px;line-height:17.04px;font-weight:normal;color:#2b2b2b;-webkit-text-stroke:0.15px currentColor;">-</div>
<div class="a" style="left:611px;top:300.56px;font-size:14.2px;line-height:17.04px;font-weight:normal;color:#262626;-webkit-text-stroke:0.22px currentColor;">частые жалобы на усталость,</div>
<div class="a" style="left:611px;top:318.26px;font-size:14.2px;line-height:17.04px;font-weight:normal;color:#262626;-webkit-text-stroke:0.22px currentColor;">бессмысленность жизни;</div>
<div class="a" style="left:588px;top:335.96px;font-size:14.2px;line-height:17.04px;font-weight:normal;color:#2b2b2b;-webkit-text-stroke:0.15px currentColor;">-</div>
<div class="a" style="left:611px;top:335.96px;font-size:14.2px;line-height:17.04px;font-weight:normal;color:#262626;-webkit-text-stroke:0.22px currentColor;">выражения вины, никчемности.</div>
<div class="a" style="left:914px;top:265.16px;font-size:14.2px;line-height:17.04px;font-weight:normal;color:#2b2b2b;-webkit-text-stroke:0.15px currentColor;">-</div>
<div class="a" style="left:937px;top:265.16px;font-size:14.2px;line-height:17.04px;font-weight:normal;color:#262626;-webkit-text-stroke:0.22px currentColor;">резкое снижение успеваемости;</div>
<div class="a" style="left:914px;top:282.86px;font-size:14.2px;line-height:17.04px;font-weight:normal;color:#2b2b2b;-webkit-text-stroke:0.15px currentColor;">-</div>
<div class="a" style="left:937px;top:282.86px;font-size:14.2px;line-height:17.04px;font-weight:normal;color:#262626;-webkit-text-stroke:0.22px currentColor;">частые пропуски занятий без</div>
<div class="a" style="left:937px;top:300.56px;font-size:14.2px;line-height:17.04px;font-weight:normal;color:#262626;-webkit-text-stroke:0.22px currentColor;">уважительных причин</div>
<div class="r" style="left:244px;top:447px;width:34px;height:35px;background:#03206b"></div>
<div class="r" style="left:278px;top:481px;width:612px;height:2px;background:#3b5690"></div>
<div class="a" style="left:290.5px;top:450.85px;font-size:23.4px;line-height:28.08px;font-weight:bold;color:#2f559a;transform:scaleX(1.04);transform-origin:0 0;-webkit-text-stroke:0.6px currentColor;">ЭТАП ИНФОРМИРОВАНИЯ СПЕЦИАЛИСТОВ</div>
<div class="a" style="left:268px;top:503.23px;font-size:19.3px;line-height:23.16px;font-weight:bold;color:#f4b71a;transform:scaleX(1.07);transform-origin:0 0;-webkit-text-stroke:0.5px currentColor;">ДЕЙСТВИЯ КУРАТОРА, КЛАССНОГО РУКОВОДИТЕЛЯ</div>
<div class="a" style="left:268.5px;top:545.75px;font-size:19.6px;line-height:23.52px;font-weight:bold;color:#e8000d;transform:scaleX(1.04);transform-origin:0 0;-webkit-text-stroke:0.5px currentColor;">1.</div>
<div class="a" style="left:304.5px;top:545.75px;font-size:19.6px;line-height:23.52px;font-weight:bold;color:#2f559a;transform:scaleX(1.045);transform-origin:0 0;-webkit-text-stroke:0.5px currentColor;"><span style="color:#e8000d">НЕЗАМЕДЛИТЕЛЬНО СООБЩИТЬ</span> О ДАННОМ ФАКТЕ</div>
<div class="a" style="left:304.5px;top:571.05px;font-size:19.6px;line-height:23.52px;font-weight:bold;color:#2f559a;transform:scaleX(1.05);transform-origin:0 0;-webkit-text-stroke:0.5px currentColor;">СПЕЦИАЛИСТАМ СЛУЖБЫ ПСИХОЛОГО-ПЕДАГОГИЧЕСКОГО</div>
<div class="a" style="left:304.5px;top:596.35px;font-size:19.6px;line-height:23.52px;font-weight:bold;color:#2f559a;transform:scaleX(1.045);transform-origin:0 0;-webkit-text-stroke:0.5px currentColor;">СОПРОВОЖДЕНИЯ.</div>
<div class="a" style="left:268.5px;top:647.95px;font-size:19.6px;line-height:23.52px;font-weight:bold;color:#2f559a;transform:scaleX(1.04);transform-origin:0 0;-webkit-text-stroke:0.5px currentColor;">2.</div>
<div class="a" style="left:304.5px;top:647.95px;font-size:19.6px;line-height:23.52px;font-weight:bold;color:#2f559a;transform:scaleX(1.065);transform-origin:0 0;-webkit-text-stroke:0.5px currentColor;">ФИКСАЦИЯ НАБЛЮДЕНИЙ</div>
<div class="a" style="left:593px;top:651.07px;font-size:16.3px;line-height:19.56px;font-weight:normal;color:#808080;font-style:italic">(Форма №1, Форма №2, Форма №3)</div>
<svg class="r" style="left:0;top:0" width="1600" height="725" viewBox="0 0 1600 725">
<g fill="none" stroke="#bf4b0d" stroke-width="5.1" stroke-linejoin="round">
<path d="M1017 482 L1017 426 Q1017 419.5 1023.5 419.5 L1161.5 419.5 Q1168 419.5 1168 426 L1168 522 Q1168 528.8 1161.5 528.8 L1047 528.8"/>
<path d="M1041 478.7 L1056 478.7 M1066 474.5 L1085.5 460.5 M1095 453.5 L1112 441 M1123 436.5 L1143.5 436.5" stroke-linecap="butt"/>
<circle cx="1061" cy="478.7" r="5.5" fill="#fff"/>
<circle cx="1090.3" cy="457.3" r="5.5" fill="#fff"/>
<circle cx="1117.3" cy="436.8" r="5.5" fill="#fff"/>
<path d="M1049.5 516.7 L1156 516.7" stroke-linecap="butt"/>
<path d="M1059 516.7 V503 H1076.5 V489.5 H1094 V476.5 H1112 V460.8 H1130 V449.3 H1147.5 V516.7 M1076.5 503 V516.7 M1094 489.5 V516.7 M1112 476.5 V516.7 M1130 460.8 V516.7" stroke-linejoin="miter" stroke-linecap="butt"/>
<!-- head -->
<path d="M1010.7 536 L1010.7 521 Q1002.5 511 1002.5 502 Q1002.5 491 1013 491 L1037.5 491 Q1042.8 491 1042.8 496 Q1042.8 500.8 1037.5 500.8 L1029 500.8 L1023.3 509.5 L1023.3 522 Q1023.3 524 1025 526 L1028 529 Q1030 531 1033 530.5 Q1037.6 529.5 1037.6 524 L1037.6 503"/>
<path d="M1010.7 523.2 L1023.3 523.2" stroke-linecap="butt"/>
<!-- body -->
<path d="M996.2 595 L996.2 544 Q996.2 535.8 1004.5 535.8 L1038.5 535.8 Q1041 535.8 1043 538 L1070 567 L1094 567 Q1100 567 1106 564.5 L1119 572 Q1122.5 575 1121 578" />
<path d="M1032 556 L1058.5 582.5 L1060 584" stroke-linecap="butt"/>
<path d="M1043.3 572 L1043.3 595" stroke-linecap="butt"/>
<path d="M1088 569 L1088 586" stroke-linecap="butt"/>
<!-- laptop -->
<path d="M1107.5 563 L1118 541 L1163.5 541 L1145 579"/>
<path d="M1058 584 L1075 584 Q1078 590.2 1084 590.2 L1143 590.2 Q1146.5 590.2 1146.5 586 L1146.5 580 L1103 578 L1089 586"/>
<path d="M1112 590 L1112 580" stroke-linecap="butt"/>
</g>
<g fill="#bf4b0d">
<circle cx="1025.6" cy="427.9" r="2.7"/><circle cx="1034.5" cy="427.9" r="2.7"/><circle cx="1043.5" cy="427.9" r="2.7"/>
<rect x="1028.8" y="476" width="5.6" height="5.6"/>
<rect x="1150.3" y="434" width="5.6" height="5.6"/>
</g>
</svg>
<!--/SLIDE-->
<!--ZOOM-->
<div class="r" style="left:1297px;top:16px;width:149px;height:84px;border-radius:6px 0 0 0;overflow:hidden;background:#c9cdcd">
<div class="r" style="left:-6px;top:-6px;width:161px;height:96px;filter:blur(2px)">
<div class="r" style="left:0;top:0;width:161px;height:96px;background:linear-gradient(90deg,#a9aeb0 0%,#cfd3d3 15%,#c4c8c8 30%,#dfe2e2 60%,#e9ecec 80%,#dde1e2 100%)"></div>
<div class="r" style="left:0;top:50px;width:45px;height:46px;background:linear-gradient(#8c9497,#5e676b)"></div>
<div class="r" style="left:8px;top:62px;width:10px;height:12px;background:#eef0f0"></div>
<div class="r" style="left:98px;top:58px;width:63px;height:38px;border-radius:14px 0 0 0;background:linear-gradient(90deg,#6f828c,#4a5c68 40%,#5d707c 70%,#384a58 100%)"></div>
<div class="r" style="left:26px;top:66px;width:32px;height:30px;border-radius:16px 10px 0 0;background:#3a2e33"></div>
<div class="r" style="left:82px;top:60px;width:60px;height:36px;border-radius:26px 30px 0 0;background:#3b2f36"></div>
<div class="r" style="left:62px;top:56px;width:32px;height:40px;border-radius:4px 4px 0 0;background:#dcc6bc"></div>
<div class="r" style="left:42px;top:12px;width:56px;height:36px;border-radius:26px 28px 8px 8px;background:#4d4245"></div>
<div class="r" style="left:46px;top:20px;width:46px;height:52px;border-radius:12px 14px 22px 22px;background:radial-gradient(ellipse at 48% 42%,#f3e4dc 0%,#e6cdc1 55%,#cfae9f 100%)"></div>
<div class="r" style="left:40px;top:11px;width:56px;height:13px;border-radius:28px 28px 6px 12px;background:#4a3f42"></div>
<div class="r" style="left:35px;top:34px;width:24px;height:12px;border:1.5px solid #5b4650;border-radius:3px"></div>
<div class="r" style="left:60px;top:34px;width:24px;height:12px;border:1.5px solid #5b4650;border-radius:3px"></div>
<div class="r" style="left:54px;top:60px;width:16px;height:6px;border-radius:5px;background:#a16d68"></div>
</div></div>
<div class="r" style="left:1296.5px;top:15.5px;width:150px;height:85px;border:2px solid #2ed872;border-radius:7px 0 0 0"></div>
<div class="r" style="left:1446px;top:16px;width:146px;height:84px;border-radius:0 6px 0 0;overflow:hidden;background:#e2c4de">
<div class="r" style="left:-6px;top:-6px;width:158px;height:96px;filter:blur(2px)">
<div class="r" style="left:0;top:0;width:158px;height:96px;background:linear-gradient(90deg,#d8b9d2 0%,#f7eef6 7%,#f4e6f2 13%,#c07fb0 18%,#d49cc6 23%,#edd6ea 30%,#e2c3dd 50%,#e8cde4 75%,#dfc2dc 100%)"></div>
<div class="r" style="left:40px;top:34px;width:72px;height:62px;border-radius:10px 10px 0 0;background:#2c2a34"></div>
<div class="r" style="left:27px;top:62px;width:100px;height:40px;border-radius:30px 40px 0 0;background:linear-gradient(#283a80,#1f2f70)"></div>
<div class="r" style="left:36px;top:76px;width:26px;height:3px;background:#8a90b0;transform:rotate(-30deg)"></div>
<div class="r" style="left:90px;top:76px;width:30px;height:3px;background:#8a90b0;transform:rotate(30deg)"></div>
<div class="r" style="left:50px;top:22px;width:46px;height:54px;border-radius:16px 16px 18px 18px;background:radial-gradient(ellipse at 50% 55%,#b48b7a 0%,#9b7061 60%,#7a574a 100%)"></div>
<div class="r" style="left:48px;top:12px;width:50px;height:20px;border-radius:25px 25px 8px 8px;background:#4a4244"></div>
<div class="r" style="left:91px;top:30px;width:9px;height:25px;border-radius:5px;background:#d4ced2"></div>
<div class="r" style="left:44px;top:34px;width:7px;height:22px;border-radius:4px;background:#3a3438"></div>
</div></div>

<div class="r" style="left:1297px;top:100px;width:149px;height:82px;background:#1c1d20"></div>
<div class="r" style="left:1446px;top:100px;width:146px;height:82px;background:#1c1d20"></div>
<div class="r" style="left:1348px;top:100px;width:47px;height:82px;overflow:hidden;background:#d6d2c6">
<div class="r" style="left:-5px;top:-5px;width:57px;height:92px;filter:blur(1.5px)">
<div class="r" style="left:0;top:0;width:57px;height:92px;background:linear-gradient(#f0efec 0%,#e9e7e3 20%,#d9d5c9 24%,#d5d0c2 70%,#cfc9b9 100%)"></div>
<div class="r" style="left:3px;top:64px;width:52px;height:30px;border-radius:16px 16px 0 0;background:#1f1d21"></div>
<div class="r" style="left:12px;top:39px;width:34px;height:27px;border-radius:17px 17px 10px 10px;background:#5e3c30"></div>
<div class="r" style="left:18px;top:47px;width:22px;height:22px;border-radius:9px 9px 11px 11px;background:radial-gradient(ellipse at 50% 45%,#d7b3a3,#b88a79)"></div>
</div></div>
<div class="r" style="left:1495px;top:100px;width:47px;height:82px;overflow:hidden;background:#d08070">
<div class="r" style="left:-5px;top:-5px;width:57px;height:92px;filter:blur(1.5px)">
<div class="r" style="left:0;top:0;width:57px;height:92px;background:linear-gradient(90deg,#e3e0cc 0%,#cfe0d8 20%,#e8d8c8 30%,#e87c6c 40%,#f0a898 52%,#e06a60 62%,#f2b4a8 75%,#e87a70 88%,#f0c8b8 100%)"></div>
<div class="r" style="left:5px;top:43px;width:44px;height:30px;border-radius:14px 18px 0 0;background:#7b2a37"></div>
<div class="r" style="left:0;top:66px;width:57px;height:26px;background:#9c857a"></div>
<div class="r" style="left:7px;top:19px;width:29px;height:32px;border-radius:14px 15px 8px 8px;background:#8d6b5c"></div>
<div class="r" style="left:10px;top:27px;width:19px;height:24px;border-radius:9px 10px 11px 11px;background:radial-gradient(ellipse at 50% 45%,#e4c0ae,#c8998a)"></div>
</div></div>

<div class="r" style="left:1338.5px;top:191px;width:66px;height:66px;border-radius:4px;overflow:hidden;background:#d4cec8">
<div class="r" style="left:-4px;top:-4px;width:74px;height:74px;filter:blur(1.6px)">
<div class="r" style="left:0;top:0;width:74px;height:74px;background:linear-gradient(90deg,#dedad6 0%,#e6e2de 25%,#cbc4bb 55%,#bfb6aa 75%,#d2ccc4 100%)"></div>
<div class="r" style="left:48px;top:10px;width:18px;height:30px;background:#a89e92;opacity:.6;border-radius:8px"></div>
<div class="r" style="left:2px;top:48px;width:68px;height:30px;border-radius:20px 24px 0 0;background:#f1eeea"></div>
<div class="r" style="left:8px;top:4px;width:40px;height:26px;border-radius:20px 20px 4px 6px;background:#5a3a2c"></div>
<div class="r" style="left:12px;top:12px;width:34px;height:44px;border-radius:12px 14px 18px 18px;background:radial-gradient(ellipse at 50% 45%,#f3cfc6 0%,#e6b3a8 60%,#cf9a8e 100%)"></div>
<div class="r" style="left:10px;top:6px;width:36px;height:10px;border-radius:18px 18px 2px 10px;background:#5b3b2e"></div>
</div></div>
<div class="nm" style="left:1439px;width:160px;text-align:center;top:216.0px">Алтын&nbsp; Баймбет...</div>
<div class="av" style="left:1338px;top:273.8px;background:#7a8b97">В</div>
<div class="r" style="left:1486px;top:274px;width:66px;height:66px;border-radius:4px;overflow:hidden;background:#b8283c">
<div class="r" style="left:-4px;top:-4px;width:74px;height:74px;filter:blur(1.3px)">
<div class="r" style="left:0;top:0;width:74px;height:74px;background:radial-gradient(circle at 30% 30%,#e8a8b0 0%,rgba(232,168,176,0) 30%),radial-gradient(circle at 80% 70%,#a01428 0%,rgba(160,20,40,0) 40%),linear-gradient(160deg,#e8c0c4 0%,#c43a50 30%,#b01c34 60%,#d46a78 85%,#e8c8cc 100%)"></div>
<svg class="r" style="left:0;top:0" width="74" height="74" viewBox="0 0 74 74"><path d="M37 62 L14 34 Q10 22 20 18 Q30 16 37 26 Q44 16 54 18 Q64 22 60 34 Z" fill="#f6f0f0"/><ellipse cx="37" cy="22" rx="12" ry="9" fill="#c04a5c" opacity=".85"/><rect x="22" y="36" width="30" height="2" fill="#6a4a50"/><rect x="28" y="42" width="18" height="1.5" fill="#9a7a80"/></svg>
</div></div>
<div class="av" style="left:1338px;top:356.4px;background:#5b2fbf">O</div>
<div class="nm" style="left:1439px;width:160px;text-align:center;top:381.2px">Tatyana</div>
<div class="nm" style="left:1291.5px;width:160px;text-align:center;top:463.8px">Бакирова С.Т.</div>
<div class="r" style="left:1486px;top:439.4px;width:66px;height:66px;border-radius:4px;overflow:hidden;background:#ddd3c6">
<div class="r" style="left:-4px;top:-4px;width:74px;height:74px;filter:blur(1.4px)">
<div class="r" style="left:0;top:0;width:74px;height:74px;background:linear-gradient(90deg,#cfc3b3 0%,#e2d8ca 30%,#b9ad9c 38%,#e9e2d8 45%,#efe9e0 80%,#d8cdbf 100%)"></div>
<div class="r" style="left:26px;top:6px;width:40px;height:52px;border-radius:20px 18px 10px 14px;background:radial-gradient(ellipse at 45% 35%,#ecdcc2,#d6bc95 60%,#c3a57c 100%)"></div>
<div class="r" style="left:30px;top:14px;width:16px;height:24px;border-radius:8px;background:#ead7c8"></div>
<div class="r" style="left:58px;top:12px;width:12px;height:38px;border-radius:6px;background:#e0c8b8"></div>
<div class="r" style="left:10px;top:44px;width:64px;height:32px;border-radius:18px 8px 0 0;background:linear-gradient(155deg,#3c3129 0%,#3c3129 18%,#b98f45 22%,#a8823c 34%,#e3d5b8 38%,#d9c8a6 50%,#3a3430 54%,#2e2a27 100%)"></div>
<div class="r" style="left:56px;top:40px;width:18px;height:34px;background:#2c2a2a;border-radius:8px 0 0 0"></div>
</div></div>
<div class="av" style="left:1338px;top:521.6px;background:#f2561d">I</div>
<div class="r" style="left:1486px;top:522.5px;width:66px;height:66px;border-radius:4px;overflow:hidden;background:#e4dde4">
<div class="r" style="left:-4px;top:-4px;width:74px;height:74px;filter:blur(1.3px)">
<div class="r" style="left:0;top:0;width:74px;height:74px;background:linear-gradient(90deg,#d9d0d8 0%,#ece6ec 40%,#e6dfe6 70%,#d8cdd6 100%)"></div>
<div class="r" style="left:14px;top:6px;width:46px;height:66px;border-radius:22px 22px 6px 6px;background:radial-gradient(ellipse at 50% 30%,#ecdcc0,#d3b98f 55%,#bfa27a 100%)"></div>
<div class="r" style="left:6px;top:62px;width:62px;height:14px;border-radius:14px 14px 0 0;background:#2a2526"></div>
<div class="r" style="left:23px;top:18px;width:28px;height:40px;border-radius:12px 12px 14px 14px;background:radial-gradient(ellipse at 50% 45%,#f5ddd0,#e3bca8)"></div>
<div class="r" style="left:27px;top:29px;width:7px;height:2px;background:#6a4a40"></div>
<div class="r" style="left:40px;top:29px;width:7px;height:2px;background:#6a4a40"></div>
<div class="r" style="left:32px;top:47px;width:10px;height:4px;border-radius:2px;background:#c4525a"></div>
</div></div>
<div class="av" style="left:1338px;top:604.2px;background:#4b5d6d">Ж</div>
<div class="nm" style="left:1439px;width:160px;text-align:center;top:629.0px">Маженова С.С.</div>
<div class="nm" style="left:1291.5px;width:160px;text-align:center;top:711.6px">Пользователь...</div>
<div class="nm" style="left:1439px;width:160px;text-align:center;top:711.6px">iPhone (Айгерим)</div>
<div class="lbl" style="left:1300.5px;top:82.2px;width:80.5px;padding-left:4px;background:rgba(38,38,40,.72);letter-spacing:0.15px">Козлова Елена</div>
<div class="lbl" style="left:1447.6px;top:82.2px;width:77.4px;letter-spacing:0.0px"><svg class="mic" width="14" height="14" viewBox="0 0 14 14"><rect x="4.6" y="1.5" width="4.4" height="7" rx="2.2" fill="#e0475a"/><path d="M3.2 6.5a3.6 3.6 0 0 0 7.2 0 M6.8 10.2v1.8 M4.6 12.3h4.4" fill="none" stroke="#e0475a" stroke-width="1"/><path d="M1.5 13 L12.5 1.2" stroke="#ee6a78" stroke-width="1.1"/></svg>jayaubaev.jk</div>
<div class="lbl" style="left:1300.5px;top:165.1px;width:87.5px;letter-spacing:0.25px"><svg class="mic" width="14" height="14" viewBox="0 0 14 14"><rect x="4.6" y="1.5" width="4.4" height="7" rx="2.2" fill="#e0475a"/><path d="M3.2 6.5a3.6 3.6 0 0 0 7.2 0 M6.8 10.2v1.8 M4.6 12.3h4.4" fill="none" stroke="#e0475a" stroke-width="1"/><path d="M1.5 13 L12.5 1.2" stroke="#ee6a78" stroke-width="1.1"/></svg>Ирина Ходан</div>
<div class="lbl" style="left:1447.6px;top:165.1px;width:123.9px;letter-spacing:0.25px"><svg class="mic" width="14" height="14" viewBox="0 0 14 14"><rect x="4.6" y="1.5" width="4.4" height="7" rx="2.2" fill="#e0475a"/><path d="M3.2 6.5a3.6 3.6 0 0 0 7.2 0 M6.8 10.2v1.8 M4.6 12.3h4.4" fill="none" stroke="#e0475a" stroke-width="1"/><path d="M1.5 13 L12.5 1.2" stroke="#ee6a78" stroke-width="1.1"/></svg>Ақсәулем Копишева</div>
<div class="lbl" style="left:1300.5px;top:247.9px;width:116.5px;letter-spacing:0.25px"><svg class="mic" width="14" height="14" viewBox="0 0 14 14"><rect x="4.6" y="1.5" width="4.4" height="7" rx="2.2" fill="#e0475a"/><path d="M3.2 6.5a3.6 3.6 0 0 0 7.2 0 M6.8 10.2v1.8 M4.6 12.3h4.4" fill="none" stroke="#e0475a" stroke-width="1"/><path d="M1.5 13 L12.5 1.2" stroke="#ee6a78" stroke-width="1.1"/></svg>Polat.janna@mail.ru</div>
<div class="lbl" style="left:1447.6px;top:247.9px;width:114.4px;letter-spacing:0.25px"><svg class="mic" width="14" height="14" viewBox="0 0 14 14"><rect x="4.6" y="1.5" width="4.4" height="7" rx="2.2" fill="#e0475a"/><path d="M3.2 6.5a3.6 3.6 0 0 0 7.2 0 M6.8 10.2v1.8 M4.6 12.3h4.4" fill="none" stroke="#e0475a" stroke-width="1"/><path d="M1.5 13 L12.5 1.2" stroke="#ee6a78" stroke-width="1.1"/></svg>Алтын Баймбетова</div>
<div class="lbl" style="left:1300.5px;top:330.8px;width:144.2px;letter-spacing:0.0px"><svg class="mic" width="14" height="14" viewBox="0 0 14 14"><rect x="4.6" y="1.5" width="4.4" height="7" rx="2.2" fill="#e0475a"/><path d="M3.2 6.5a3.6 3.6 0 0 0 7.2 0 M6.8 10.2v1.8 M4.6 12.3h4.4" fill="none" stroke="#e0475a" stroke-width="1"/><path d="M1.5 13 L12.5 1.2" stroke="#ee6a78" stroke-width="1.1"/></svg>Валентина Федулова СВ...</div>
<div class="lbl" style="left:1447.6px;top:330.8px;width:144.9px;letter-spacing:0.25px"><svg class="mic" width="14" height="14" viewBox="0 0 14 14"><rect x="4.6" y="1.5" width="4.4" height="7" rx="2.2" fill="#e0475a"/><path d="M3.2 6.5a3.6 3.6 0 0 0 7.2 0 M6.8 10.2v1.8 M4.6 12.3h4.4" fill="none" stroke="#e0475a" stroke-width="1"/><path d="M1.5 13 L12.5 1.2" stroke="#ee6a78" stroke-width="1.1"/></svg>Юлия Валерьевна Гор...</div>
<div class="lbl" style="left:1300.5px;top:413.6px;width:77.5px;letter-spacing:0.25px"><svg class="mic" width="14" height="14" viewBox="0 0 14 14"><rect x="4.6" y="1.5" width="4.4" height="7" rx="2.2" fill="#e0475a"/><path d="M3.2 6.5a3.6 3.6 0 0 0 7.2 0 M6.8 10.2v1.8 M4.6 12.3h4.4" fill="none" stroke="#e0475a" stroke-width="1"/><path d="M1.5 13 L12.5 1.2" stroke="#ee6a78" stroke-width="1.1"/></svg>Olga Legler</div>
<div class="lbl" style="left:1447.6px;top:413.6px;width:56.9px;letter-spacing:0.0px"><svg class="mic" width="14" height="14" viewBox="0 0 14 14"><rect x="4.6" y="1.5" width="4.4" height="7" rx="2.2" fill="#e0475a"/><path d="M3.2 6.5a3.6 3.6 0 0 0 7.2 0 M6.8 10.2v1.8 M4.6 12.3h4.4" fill="none" stroke="#e0475a" stroke-width="1"/><path d="M1.5 13 L12.5 1.2" stroke="#ee6a78" stroke-width="1.1"/></svg>Tatyana</div>
<div class="lbl" style="left:1300.5px;top:496.4px;width:89.1px;letter-spacing:0.25px"><svg class="mic" width="14" height="14" viewBox="0 0 14 14"><rect x="4.6" y="1.5" width="4.4" height="7" rx="2.2" fill="#e0475a"/><path d="M3.2 6.5a3.6 3.6 0 0 0 7.2 0 M6.8 10.2v1.8 M4.6 12.3h4.4" fill="none" stroke="#e0475a" stroke-width="1"/><path d="M1.5 13 L12.5 1.2" stroke="#ee6a78" stroke-width="1.1"/></svg>Бакирова С.Т.</div>
<div class="lbl" style="left:1447.6px;top:496.4px;width:102.4px;letter-spacing:0.25px"><svg class="mic" width="14" height="14" viewBox="0 0 14 14"><rect x="4.6" y="1.5" width="4.4" height="7" rx="2.2" fill="#e0475a"/><path d="M3.2 6.5a3.6 3.6 0 0 0 7.2 0 M6.8 10.2v1.8 M4.6 12.3h4.4" fill="none" stroke="#e0475a" stroke-width="1"/><path d="M1.5 13 L12.5 1.2" stroke="#ee6a78" stroke-width="1.1"/></svg>Ольга Искакова</div>
<div class="lbl" style="left:1300.5px;top:579.3px;width:144.2px;letter-spacing:0.25px"><svg class="mic" width="14" height="14" viewBox="0 0 14 14"><rect x="4.6" y="1.5" width="4.4" height="7" rx="2.2" fill="#e0475a"/><path d="M3.2 6.5a3.6 3.6 0 0 0 7.2 0 M6.8 10.2v1.8 M4.6 12.3h4.4" fill="none" stroke="#e0475a" stroke-width="1"/><path d="M1.5 13 L12.5 1.2" stroke="#ee6a78" stroke-width="1.1"/></svg>Гаршанова Ирина Рол...</div>
<div class="lbl" style="left:1447.6px;top:579.3px;width:139.0px;letter-spacing:0.25px"><svg class="mic" width="14" height="14" viewBox="0 0 14 14"><rect x="4.6" y="1.5" width="4.4" height="7" rx="2.2" fill="#e0475a"/><path d="M3.2 6.5a3.6 3.6 0 0 0 7.2 0 M6.8 10.2v1.8 M4.6 12.3h4.4" fill="none" stroke="#e0475a" stroke-width="1"/><path d="M1.5 13 L12.5 1.2" stroke="#ee6a78" stroke-width="1.1"/></svg>Оксана Клявинш СВГТК</div>
<div class="lbl" style="left:1300.5px;top:662.1px;width:119.3px;letter-spacing:0.25px"><svg class="mic" width="14" height="14" viewBox="0 0 14 14"><rect x="4.6" y="1.5" width="4.4" height="7" rx="2.2" fill="#e0475a"/><path d="M3.2 6.5a3.6 3.6 0 0 0 7.2 0 M6.8 10.2v1.8 M4.6 12.3h4.4" fill="none" stroke="#e0475a" stroke-width="1"/><path d="M1.5 13 L12.5 1.2" stroke="#ee6a78" stroke-width="1.1"/></svg>Жанбота Рымбаева</div>
<div class="lbl" style="left:1447.6px;top:662.1px;width:96.2px;letter-spacing:0.25px"><svg class="mic" width="14" height="14" viewBox="0 0 14 14"><rect x="4.6" y="1.5" width="4.4" height="7" rx="2.2" fill="#e0475a"/><path d="M3.2 6.5a3.6 3.6 0 0 0 7.2 0 M6.8 10.2v1.8 M4.6 12.3h4.4" fill="none" stroke="#e0475a" stroke-width="1"/><path d="M1.5 13 L12.5 1.2" stroke="#ee6a78" stroke-width="1.1"/></svg>Маженова С.С.</div>
<!--/ZOOM-->
</body></html>
